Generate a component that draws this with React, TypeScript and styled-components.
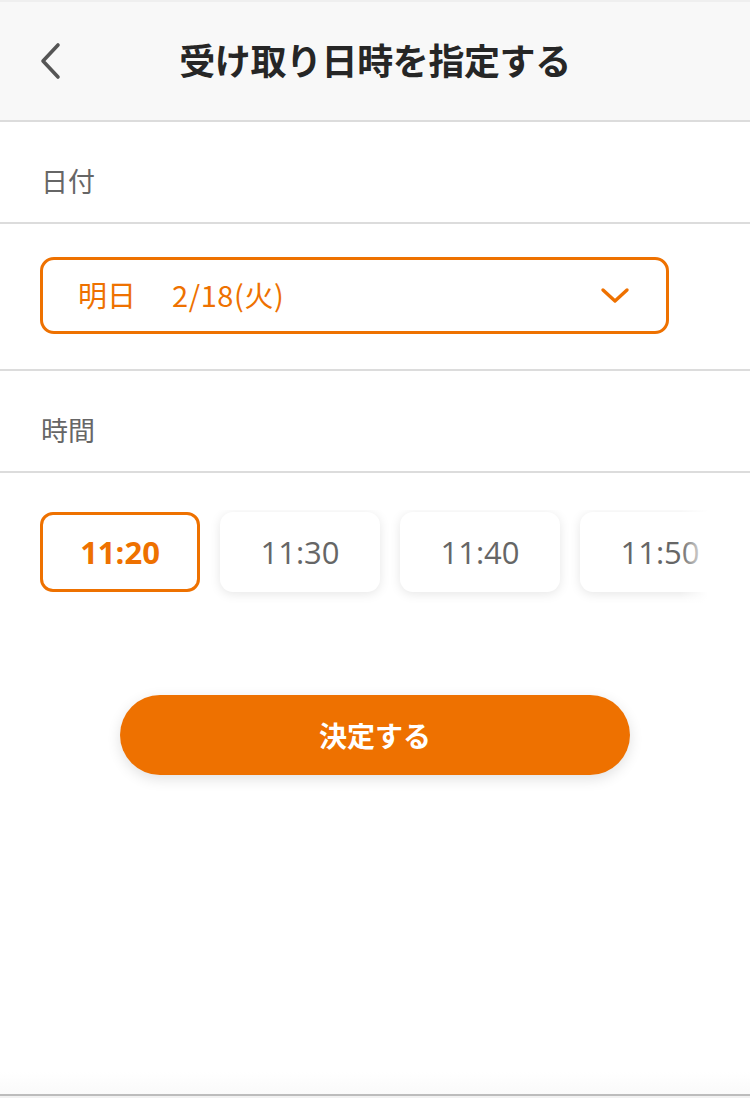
import React, { useState } from "react";
import styled, { createGlobalStyle } from "styled-components";

const ORANGE = "#ee7100";

const GlobalStyle = createGlobalStyle`
  html, body {
    margin: 0;
    padding: 0;
    background: #fff;
  }
  body {
    font-family: "Noto Sans CJK JP", "Noto Sans", sans-serif;
  }
  * {
    box-sizing: border-box;
  }
`;

const Page = styled.div`
  min-height: 100vh;
  display: flex;
  flex-direction: column;
`;

const Header = styled.header`
  height: 122px;
  border-top: 2px solid #efefef;
  border-bottom: 2px solid #dcdcdc;
  background: #f8f8f8;
  display: grid;
  grid-template-columns: 100px 1fr 100px;
  align-items: center;
`;

const BackButton = styled.button`
  border: 0;
  background: none;
  padding: 0 0 0 38px;
  height: 60px;
  display: flex;
  align-items: center;
  cursor: pointer;
`;

const Title = styled.h1`
  margin: 0;
  text-align: center;
  font-size: 36px;
  font-weight: 700;
  color: #262626;
  letter-spacing: -0.4px;
  line-height: 1;
  padding-bottom: 4px;
`;

const Main = styled.main`
  flex: 1;
  display: flex;
  flex-direction: column;
`;

const Label = styled.div`
  height: 102px;
  padding: 16px 41px 0;
  display: flex;
  align-items: center;
  font-size: 27px;
  color: #666;
  border-bottom: 2px solid #dcdcdc;
`;

const SelectSection = styled.div`
  padding: 33px 81px 35px 40px;
  border-bottom: 2px solid #dcdcdc;
`;

const Select = styled.div`
  height: 77px;
  border: 3px solid ${ORANGE};
  border-radius: 14px;
  display: flex;
  align-items: center;
  justify-content: space-between;
  padding: 0 36px 0 35px;
  color: ${ORANGE};
  font-size: 29px;
  cursor: pointer;
`;

const SelectText = styled.span`
  display: flex;
  gap: 36px;
  line-height: 1;
  padding-bottom: 2px;
`;

const DateText = styled.span`
  letter-spacing: 0.6px;
`;

const ChipScroller = styled.div`
  position: relative;
  margin-top: 37px;
`;

const ChipRow = styled.div`
  display: flex;
  gap: 20px;
  padding: 2px 40px 20px;
  overflow: hidden;
`;

const Fade = styled.div`
  position: absolute;
  top: 0;
  right: 0;
  bottom: 0;
  width: 70px;
  background: linear-gradient(to right, rgba(255, 255, 255, 0) 0%, #fff 40%);
  pointer-events: none;
`;

const Chip = styled.button<{ $active?: boolean }>`
  flex: 0 0 160px;
  height: 80px;
  border-radius: 13px;
  border: 3px solid ${(p) => (p.$active ? ORANGE : "transparent")};
  background: #fff;
  box-shadow: ${(p) => (p.$active ? "none" : "0 2px 11px rgba(0, 0, 0, 0.1)")};
  font-family: "Open Sans", "Noto Sans", sans-serif;
  font-size: 31px;
  font-weight: ${(p) => (p.$active ? 700 : 400)};
  color: ${(p) => (p.$active ? ORANGE : "#666")};
  display: flex;
  align-items: center;
  justify-content: center;
  padding: 0;
  cursor: pointer;
`;

const SubmitWrap = styled.div`
  display: flex;
  justify-content: center;
  margin-top: 83px;
`;

const SubmitButton = styled.button`
  width: 510px;
  height: 80px;
  border: 0;
  border-radius: 40px;
  background: ${ORANGE};
  color: #fff;
  font-family: "Noto Sans CJK JP", sans-serif;
  font-size: 28px;
  font-weight: 700;
  box-shadow: 0 4px 14px rgba(0, 0, 0, 0.12);
  cursor: pointer;
`;

const Footer = styled.footer`
  height: 26px;
  background: linear-gradient(to bottom, #fff 0%, #f9f9f9 100%);
  display: flex;
  flex-direction: column;
  justify-content: flex-end;
`;

const FooterEdge = styled.div`
  height: 4px;
  border-top: 2px solid #bcbcbc;
  background: #f1f1f1;
`;

const ChevronLeft = () => (
  <svg width="24" height="38" viewBox="0 0 24 38">
    <path d="M20 3 L5 19 L20 35" fill="none" stroke="#555" strokeWidth="3.6" strokeLinecap="round" strokeLinejoin="round" />
  </svg>
);

const ChevronDown = () => (
  <svg width="30" height="18" viewBox="0 0 30 18">
    <path d="M3 3 L15 14 L27 3" fill="none" stroke={ORANGE} strokeWidth="3.4" strokeLinecap="round" strokeLinejoin="round" />
  </svg>
);

const TIMES = ["11:20", "11:30", "11:40", "11:50"];

export default function App() {
  const [selected, setSelected] = useState("11:20");

  return (
    <Page>
      <GlobalStyle />
      <Header>
        <BackButton aria-label="戻る">
          <ChevronLeft />
        </BackButton>
        <Title>受け取り日時を指定する</Title>
        <div />
      </Header>
      <Main>
        <Label>日付</Label>
        <SelectSection>
          <Select>
            <SelectText>
              <span>明日</span>
              <DateText>2/18(火)</DateText>
            </SelectText>
            <ChevronDown />
          </Select>
        </SelectSection>
        <Label>時間</Label>
        <ChipScroller>
          <ChipRow>
            {TIMES.map((t) => (
              <Chip key={t} $active={t === selected} onClick={() => setSelected(t)}>
                {t}
              </Chip>
            ))}
          </ChipRow>
          <Fade />
        </ChipScroller>
        <SubmitWrap>
          <SubmitButton>決定する</SubmitButton>
        </SubmitWrap>
      </Main>
      <Footer>
        <FooterEdge />
      </Footer>
    </Page>
  );
}
